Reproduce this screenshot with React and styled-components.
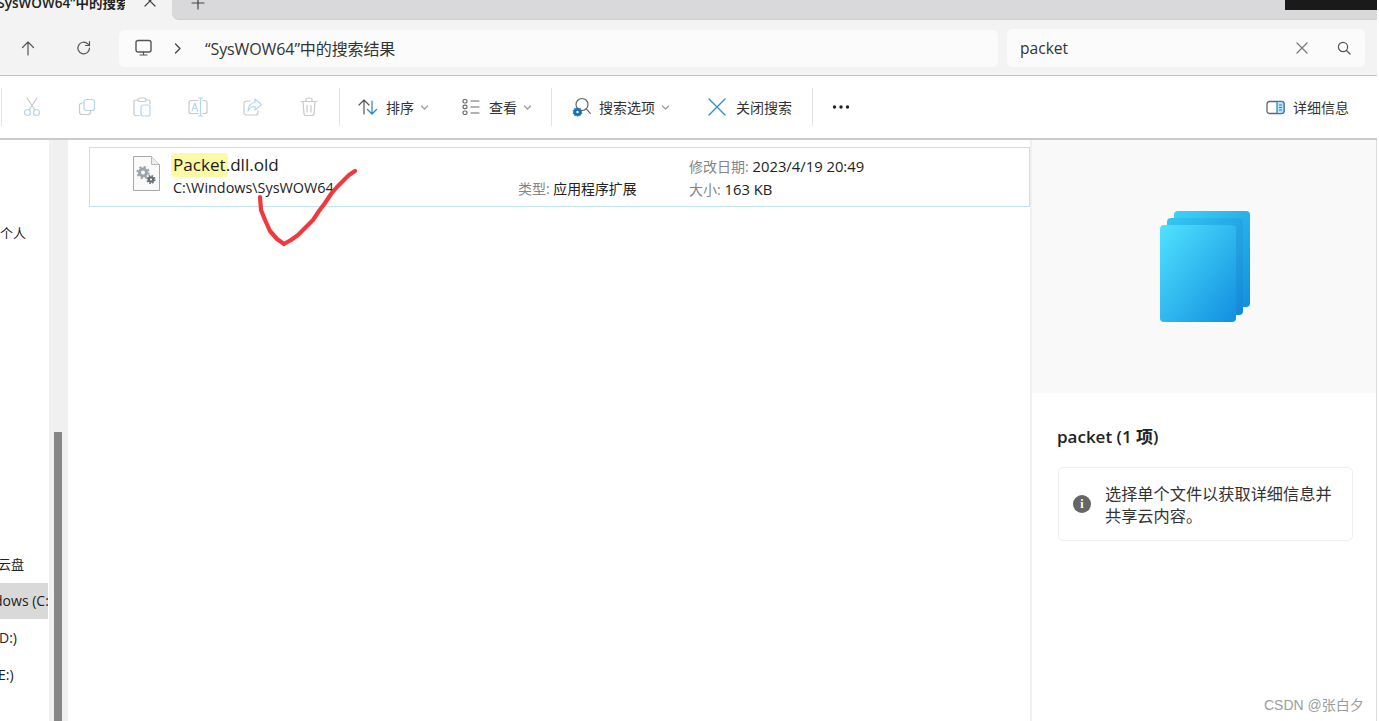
import React from "react";
import styled, { createGlobalStyle } from "styled-components";

const Global = createGlobalStyle`
  html, body { margin: 0; padding: 0; background: #fff; }
  #root { width: 1379px; height: 721px; overflow: hidden; }
`;
const FONT = `"Open Sans", "Noto Sans CJK SC", sans-serif`;

const Page = styled.div`
  position: relative; width: 1379px; height: 721px; overflow: hidden; background: #fff;
  font-family: ${FONT}; color: #1c1c1c;
`;
const Win = styled.div`
  width: 1377px; height: 721px; display: flex; flex-direction: column; overflow: hidden;
`;
const TabStrip = styled.div`
  height: 20px; flex: none; display: flex; background: #f3f3f3;
`;
const ActiveTab = styled.div`
  width: 172px; flex: none; position: relative; overflow: hidden; display: flex;
`;
const TabTitle = styled.div`
  width: 125px; flex: none; overflow: hidden; white-space: nowrap; font-size: 13.5px; font-weight: 600;
  line-height: 18px; margin-top: -6px; text-indent: -8px; color: #222;
`;
const TabClose = styled.div`
  margin-left: 17px; margin-top: -7px; height: 18px;
`;
const TabRest = styled.div`
  flex: 1; display: flex; background: #d9d9db; border-bottom-left-radius: 7px; border-bottom: 1px solid #cfcfcf;
  padding-left: 19px;
`;
const PlusWrap = styled.div` margin-top: -7px; height: 18px; `;
const BlackBox = styled.div`
  margin-left: auto; width: 92px; height: 10px; background: #1a1a1a;
`;
const AddressRow = styled.div`
  height: 55px; flex: none; background: #f3f3f3; display: flex; align-items: center;
  border-bottom: 1px solid #c4c4c4; box-sizing: content-box;
`;
const NavIcon = styled.div`
  flex: none; width: ${p => p.$w}px; display: flex; justify-content: center;
`;
const AddressBox = styled.div`
  width: 879px; height: 37px; margin-left: 7px; background: #fbfbfb; border-radius: 6px;
  display: flex; align-items: center; padding-left: 16px; box-sizing: border-box; flex: none;
  margin-top: 1px;
`;
const Crumb = styled.div` font-size: 16px; color: #333; white-space: nowrap; margin-left: 23px; letter-spacing: -0.1px; `;
const ChevronWrap = styled.div` margin-left: 21px; display: flex; `;
const SearchBox = styled.div`
  width: 358px; height: 38px; margin-left: 9px; background: #fbfbfb; border-radius: 6px;
  display: flex; align-items: center; padding: 0 14px 0 13px; box-sizing: border-box; flex: none;
  font-size: 15.6px; color: #333;
`;
const SearchText = styled.div` flex: 1; `;
const SearchIcons = styled.div` display: flex; align-items: center; gap: 29px; `;
const Toolbar = styled.div`
  height: 62px; flex: none; display: flex; align-items: center; background: #fff;
  border-bottom: 2px solid #cbcbcb;
`;
const Sep = styled.div`
  width: 1px; height: 38px; background: #e3e3e3; flex: none; margin-left: ${p => p.$ml || 0}px;
`;
const IconSlot = styled.div`
  width: 55.4px; flex: none; display: flex; justify-content: center;
  margin-left: ${p => p.$ml || 0}px;
`;
const ToolButton = styled.div`
  display: flex; align-items: center; flex: none; margin-left: ${p => p.$ml || 0}px;
  margin-right: ${p => p.$mr || 0}px; gap: 8px;
  font-size: 14px; color: #333; white-space: nowrap;
`;
const Caret = styled.span` margin-left: -2px; display: flex; `;
const CloseLabel = styled.span` margin-left: 2px; `;
const Spacer = styled.div` flex: 1; `;
const Body = styled.div` flex: 1; display: flex; min-height: 0; `;
const Nav = styled.div`
  width: 49px; flex: none; overflow: hidden; padding-top: 75px; box-sizing: border-box; background: #fff;
`;
const NavItem = styled.div`
  height: 36px; line-height: 36px; white-space: nowrap; font-size: ${p => p.$fs || 13}px; color: #222;
  margin-top: ${p => p.$mt || 0}px; background: ${p => (p.$sel ? "#d9d9d9" : "transparent")};
  width: 48px; overflow: hidden;
`;
const NavText = styled.span` display: inline-block; margin-left: ${p => p.$x || 0}px; `;
const Track = styled.div`
  width: 19px; flex: none; background: #f0f0f0; padding: 292px 0 0 5px; box-sizing: border-box;
  display: flex;
`;
const Thumb = styled.div` width: 8px; flex: none; background: #868686; `;
const Content = styled.div`
  flex: none; width: 962px; background: #fff; padding: 7px 0 0 21px; box-sizing: border-box;
`;
const FileRow = styled.div`
  width: 941px; height: 60px; box-sizing: border-box; border: 1px solid #bfe3ef;
  display: grid; grid-template-columns: 83px 345px 171px 1fr; align-items: stretch;
`;
const FileIconCell = styled.div` padding: 8px 0 0 43px; `;
const NameCell = styled.div` position: relative; `;
const Name = styled.div`
  font-size: 17.1px; line-height: 24px; margin-top: 5px; color: #1c1c1c; white-space: nowrap;
`;
const Mark = styled.span`
  display: inline-block; background: #fdfaa6; border-radius: 3px; padding: 0 2px; margin-left: -2px; margin-right: -2px;
`;
const PathText = styled.div` font-size: 14.4px; line-height: 20px; margin-top: 1px; color: #222; white-space: nowrap; `;
const TypeCell = styled.div` padding-top: 31px; font-size: 13.9px; line-height: 20px; white-space: nowrap; color: #222; `;
const MetaCell = styled.div` padding-top: 7px; font-size: 14.8px; line-height: 23px; white-space: nowrap; color: #222; `;
const Label = styled.span` color: #858585; font-size: 14px; `;
const Details = styled.div`
  flex: 1; min-width: 0; display: flex; flex-direction: column; border-left: 2px solid #f0f0f0;
  border-right: 1px solid #dcdcdc; background: #fff;
`;
const Preview = styled.div`
  height: 253px; flex: none; background: #f9f9fa; display: flex; align-items: center; justify-content: center;
  padding-left: 2px;
`;
const DetailBody = styled.div` padding: 31px 23px 0 25px; `;
const Heading = styled.div` font-size: 17px; font-weight: 600; line-height: 26px; color: #222; `;
const InfoCard = styled.div`
  margin: 17px 0 0 1px; height: 74px; box-sizing: border-box; border: 1px solid #eeeeee; border-radius: 5px;
  display: flex; align-items: center; padding: 0 14px; background: #fff;
`;
const InfoDot = styled.div`
  width: 18px; height: 18px; border-radius: 50%; background: #666; color: #fff; flex: none;
  display: flex; align-items: center; justify-content: center; font-size: 12px; font-weight: 700;
  font-family: "Liberation Serif", serif;
`;
const InfoText = styled.div`
  margin-left: 14px; padding-top: 2px; font-size: 16.2px; line-height: 22px; color: #333; white-space: nowrap;
`;
const Watermark = styled.div`
  position: absolute; left: 1264px; top: 695px; font-size: 14px; line-height: 20px; color: #9c9c9c; white-space: nowrap;
  font-family: "Liberation Sans", "Noto Sans CJK SC", sans-serif;
`;
const Ink = styled.svg` position: absolute; left: 0; top: 0; pointer-events: none; `;

const G = "#c9c9c9";
const B = "#b4d6ee";
const Ico = ({ s = 20, w, h, children, sw = 1.2 }) => (
  <svg width={w || s} height={h || s} viewBox={`0 0 ${w || s} ${h || s}`} fill="none" strokeWidth={sw} strokeLinecap="round" strokeLinejoin="round">
    {children}
  </svg>
);
const Chevron = () => (
  <Ico w={9} h={9}><path d="M1.5 3l3 3 3-3" stroke="#9a9a9a" /></Ico>
);

export default function App() {
  return (
    <Page>
      <Global />
      <Win>
        <TabStrip>
          <ActiveTab>
            <TabTitle>“SysWOW64”中的搜索结果</TabTitle>
            <TabClose>
              <Ico s={18}><path d="M3 3l10 10M13 3L3 13" stroke="#444" /></Ico>
            </TabClose>
          </ActiveTab>
          <TabRest>
            <PlusWrap><Ico s={14}><path d="M7 1v12M1 7h12" stroke="#444" /></Ico></PlusWrap>
            <BlackBox />
          </TabRest>
        </TabStrip>
        <AddressRow>
          <NavIcon $w={56}>
            <Ico s={18}><path d="M9 16V3M3.5 8.5L9 3l5.5 5.5" stroke="#555" /></Ico>
          </NavIcon>
          <NavIcon $w={56}>
            <Ico s={18}><path d="M14.5 9a5.8 5.8 0 1 1-1.7-4.1L14.5 6.5M14.5 2.5v4h-4" stroke="#555" /></Ico>
          </NavIcon>
          <AddressBox>
            <Ico s={18}><rect x="1" y="1.5" width="15" height="11.5" rx="2" stroke="#555" strokeWidth="1.4" /><path d="M5 16h7M8.5 13v3" stroke="#555" /></Ico>
            <ChevronWrap>
              <Ico w={8} h={12}><path d="M1.5 2l4.5 4.5L1.5 11" stroke="#444" strokeWidth="1.3" /></Ico>
            </ChevronWrap>
            <Crumb>“SysWOW64”中的搜索结果</Crumb>
          </AddressBox>
          <SearchBox>
            <SearchText>packet</SearchText>
            <SearchIcons>
              <Ico s={12}><path d="M1 1l10 10M11 1L1 11" stroke="#777" /></Ico>
              <Ico s={14}><circle cx="6" cy="6" r="4.6" stroke="#555" /><path d="M9.5 9.5l3.5 3.5" stroke="#555" /></Ico>
            </SearchIcons>
          </SearchBox>
        </AddressRow>
        <Toolbar>
          <Sep $ml={1} />
          <IconSlot $ml={2}>
            <Ico w={18} h={20}>
              <path d="M4 1l8 12M14 1L6 13" stroke={G} />
              <circle cx="4.5" cy="15.5" r="3" stroke={B} /><circle cx="13.5" cy="15.5" r="3" stroke={B} />
            </Ico>
          </IconSlot>
          <IconSlot>
            <Ico w={18} h={18}>
              <rect x="6" y="1.5" width="10.5" height="11" rx="2.5" stroke={B} />
              <path d="M6 5H4a2.5 2.5 0 0 0-2.5 2.5V14A2.5 2.5 0 0 0 4 16.5h6a2.5 2.5 0 0 0 2.5-2.5v-1.5" stroke={G} />
            </Ico>
          </IconSlot>
          <IconSlot>
            <Ico w={18} h={20}>
              <path d="M5 3H2.5A1.5 1.5 0 0 0 1 4.500V17a1.500 1.500 0 0 0 1.500 1.500H6M13 3h2.500A1.500 1.500 0 0 1 17 4.500V7" stroke={G} />
              <rect x="5" y="1" width="8" height="3.500" rx="1.500" stroke={G} />
              <rect x="8" y="8" width="9" height="11" rx="2" stroke={B} />
            </Ico>
          </IconSlot>
          <IconSlot>
            <Ico w={20} h={20}>
              <path d="M10 3.500H3A2 2 0 0 0 1 5.500v9a2 2 0 0 0 2 2h7M15 3.500h2a2 2 0 0 1 2 2v9a2 2 0 0 1-2 2h-2" stroke={G} />
              <path d="M12.500 1v18M10.500 1h4M10.500 19h4" stroke={B} />
              <path d="M4 14l2.800-8 2.800 8M5 11.500h3.600" stroke={B} />
            </Ico>
          </IconSlot>
          <IconSlot>
            <Ico w={20} h={20}>
              <path d="M7 4H3.500A2.500 2.500 0 0 0 1 6.500v9A2.500 2.500 0 0 0 3.500 18h9a2.500 2.500 0 0 0 2.500-2.500V14" stroke={G} />
              <path d="M12 2l6.500 5.500L12 13V9.500C9 9.500 6.500 11 5 14c0-5 3-8.500 7-8.500z" stroke={B} />
            </Ico>
          </IconSlot>
          <IconSlot>
            <Ico w={18} h={20}>
              <path d="M1 4.500h16M6 4.500V3a2 2 0 0 1 2-2h2a2 2 0 0 1 2 2v1.500M3 4.500l1 12.500a2 2 0 0 0 2 1.500h6a2 2 0 0 0 2-1.500l1-12.500M7 8.500v6.500M11 8.500v6.500" stroke={G} />
            </Ico>
          </IconSlot>
          <Sep $ml={2.600} />
          <ToolButton $ml={18}>
            <Ico w={20} h={18}>
              <path d="M6 16V2M1 7l5-5 5 5" stroke="#555" />
              <path d="M14 3v13M9.500 11.500L14 16l4.500-4.500" stroke="#1f83c9" />
            </Ico>
            <span>排序</span>
            <Caret><Chevron /></Caret>
          </ToolButton>
          <ToolButton $ml={33}>
            <Ico w={19} h={18}>
              <rect x="1" y="1.500" width="4" height="3.500" rx="1.500" stroke="#666" />
              <rect x="1" y="7.200" width="4" height="3.500" rx="1.500" stroke="#666" />
              <rect x="1" y="13" width="4" height="3.500" rx="1.500" stroke="#666" />
              <path d="M9 3h8M9 9h8M9 15h8" stroke="#666" />
            </Ico>
            <span>查看</span>
            <Caret><Chevron /></Caret>
          </ToolButton>
          <Sep $ml={19} />
          <ToolButton $ml={20}>
            <Ico w={19} h={20}>
              <circle cx="10" cy="7.500" r="6" stroke="#666" />
              <path d="M14.300 11.800l4 4.500" stroke="#666" />
              <path d="M5.500 10.500l1.300 1 1.600-.3.400 1.500 1.300.9-.7 1.400.7 1.400-1.300.9-.4 1.500-1.600-.3-1.300 1-1.300-1-1.600.3-.4-1.500-1.300-.9.7-1.400-.7-1.400 1.300-.9.400-1.500 1.600.3z" fill="#1670b8" stroke="#1670b8" strokeWidth=".4" />
              <circle cx="5.500" cy="15" r="1.200" fill="#fff" />
            </Ico>
            <span>搜索选项</span>
            <Caret><Chevron /></Caret>
          </ToolButton>
          <ToolButton $ml={38}>
            <Ico s={18}><path d="M1 1l16 16M17 1L1 17" stroke="#2e8ccf" strokeWidth="1.300" /></Ico>
            <CloseLabel>关闭搜索</CloseLabel>
          </ToolButton>
          <Sep $ml={20} />
          <ToolButton $ml={19}>
            <Ico w={18} h={6}>
              <circle cx="2.500" cy="3" r="1.700" fill="#222" /><circle cx="9" cy="3" r="1.700" fill="#222" /><circle cx="15.500" cy="3" r="1.700" fill="#222" />
            </Ico>
          </ToolButton>
          <Spacer />
          <ToolButton $mr={28}>
            <Ico w={19} h={15}>
              <rect x="1" y="1.500" width="17" height="12" rx="2.500" stroke="#666" strokeWidth="1.300" />
              <path d="M11 1.500h4.500a2.500 2.500 0 0 1 2.500 2.500v7a2.500 2.500 0 0 1-2.500 2.500H11z" fill="#bfe0f6" stroke="#1f83c9" strokeWidth="1.200" />
              <path d="M13.500 5h2M13.500 7.500h2M13.500 10h2" stroke="#1f83c9" />
            </Ico>
            <span>详细信息</span>
          </ToolButton>
        </Toolbar>
        <Body>
          <Nav>
            <NavItem><NavText>个人</NavText></NavItem>
            <NavItem $mt={295}><NavText $x={-2}>云盘</NavText></NavItem>
            <NavItem $sel $mt={1} $fs={14}><NavText $x={-31}>Windows (C:)</NavText></NavItem>
            <NavItem $mt={1} $fs={14}><NavText $x={-1}>D:)</NavText></NavItem>
            <NavItem $mt={1} $fs={14}><NavText $x={-2}>E:)</NavText></NavItem>
          </Nav>
          <Track><Thumb /></Track>
          <Content>
            <FileRow>
              <FileIconCell>
                <svg width="27" height="35" viewBox="0 0 27 35" fill="none">
                  <path d="M.5.5h18l8 8v26H.5z" fill="#fafafa" stroke="#a8a8a8" />
                  <path d="M18.500.5v8h8" stroke="#b8b8b8" fill="#eee" />
                  <circle cx="10" cy="16.500" r="3.500" stroke="#9aa4ac" strokeWidth="3" />
                  <circle cx="10" cy="16.500" r="5.600" stroke="#9aa4ac" strokeWidth="2" strokeDasharray="2.200 2.200" />
                  <circle cx="18" cy="23.500" r="2.200" stroke="#666c72" strokeWidth="2.200" />
                  <circle cx="18" cy="23.500" r="3.800" stroke="#666c72" strokeWidth="1.600" strokeDasharray="1.500 1.500" />
                </svg>
              </FileIconCell>
              <NameCell>
                <Name><Mark>Packet</Mark>.dll.old</Name>
                <PathText>C:\Windows\SysWOW64</PathText>
              </NameCell>
              <TypeCell><Label>类型:</Label> 应用程序扩展</TypeCell>
              <MetaCell>
                <div><Label>修改日期:</Label> 2023/4/19 20:49</div>
                <div><Label>大小:</Label> 163 KB</div>
              </MetaCell>
            </FileRow>
          </Content>
          <Details>
            <Preview>
              <svg width="90" height="111" viewBox="0 0 90 111">
                <defs>
                  <linearGradient id="sheet" x1="0" y1="0" x2="1" y2="1">
                    <stop offset="0" stopColor="#4fe3ff" />
                    <stop offset="1" stopColor="#128edf" />
                  </linearGradient>
                  <linearGradient id="sheetBack" x1="0" y1="0" x2="1" y2="1">
                    <stop offset="0" stopColor="#3cd2f8" />
                    <stop offset="1" stopColor="#148fdc" />
                  </linearGradient>
                  <linearGradient id="sheetMid" x1="0" y1="0" x2="1" y2="1">
                    <stop offset="0" stopColor="#35c6f2" />
                    <stop offset="1" stopColor="#1488d6" />
                  </linearGradient>
                </defs>
                <rect x="14" y="0" width="76" height="96" rx="4" fill="url(#sheetBack)" />
                <rect x="7" y="7" width="76" height="97" rx="4" fill="url(#sheetMid)" />
                <rect x="0" y="14" width="76" height="97" rx="4" fill="url(#sheet)" />
              </svg>
            </Preview>
            <DetailBody>
              <Heading>packet (1 项)</Heading>
              <InfoCard>
                <InfoDot>i</InfoDot>
                <InfoText>选择单个文件以获取详细信息并<br />共享云内容。</InfoText>
              </InfoCard>
            </DetailBody>
          </Details>
        </Body>
      </Win>
      <Ink width="1379" height="721" viewBox="0 0 1379 721" fill="none">
        <path d="M260 197l1 13 4 10 5 11 7 8 7 5 7-4 7-5 8-8 7-7 6-9 6-8 6-9 6-7 7-7 5-5 6-4" stroke="#f0393d" strokeWidth="4.200" strokeLinecap="round" strokeLinejoin="round" />
      </Ink>
      <Watermark>CSDN @张白夕</Watermark>
    </Page>
  );
}
